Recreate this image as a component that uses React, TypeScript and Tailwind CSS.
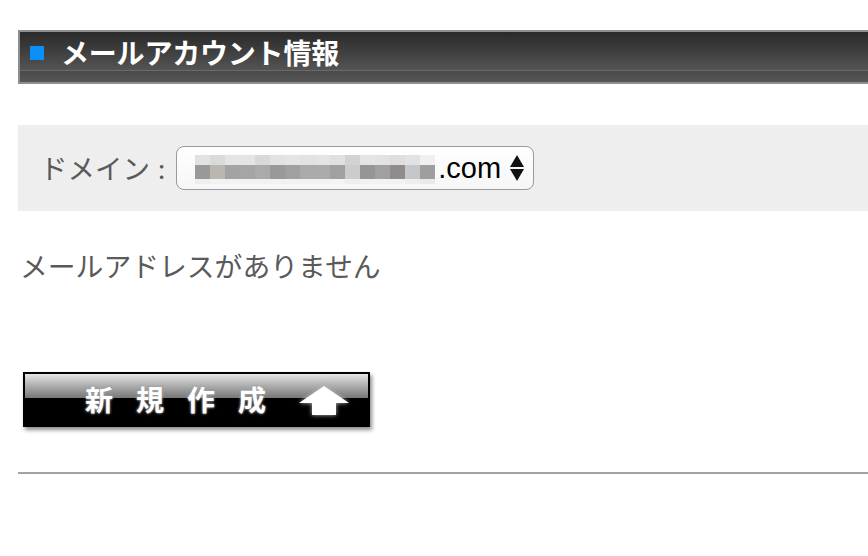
import React from "react";

const row1 = ["#e2e2e2", "#dadada", "#e4e4e4", "#e4e4e4", "#d9d9d9", "#e2e2e2", "#e4e4e4", "#e2e2e2", "#e4e4e4", "#e0e0e0", "#d2d2d2", "#e4e4e4", "#e2e2e2", "#dedede", "#e2e2e2", "#f0f0f0"];
const row2 = ["#999999", "#bbb6b0", "#a3a3a3", "#a5a5a5", "#aaaaaa", "#9a9898", "#a0a0a0", "#aaaaaa", "#aaaaaa", "#a0a0a0", "#cccccc", "#959595", "#a0a0a0", "#908c8c", "#c5c7ca", "#9e9e9e"];
const row3 = ["#eeeeee", "#f2f2f2", "#f2f2f2", "#f2f2f2", "#f2f2f2", "#f2f2f2", "#f2f2f2", "#f2f2f2", "#f2f2f2", "#f4f4f4", "#eeeeee", "#f2f2f2", "#f2f2f2", "#f2f2f2", "#eeeeee", "#eaeaea"];

function Blurred() {
  const rows = [
    { colors: row1, h: "h-[10px]" },
    { colors: row2, h: "h-[14px]" },
    { colors: row3, h: "h-[5px]" },
  ];
  return (
    <div className="flex flex-col mt-[3px]">
      {rows.map((r, i) => (
        <div key={i} className={`flex ${r.h}`}>
          {r.colors.map((c, j) => (
            <div key={j} className="w-[15px]" style={{ backgroundColor: c }} />
          ))}
        </div>
      ))}
    </div>
  );
}

export default function App() {
  return (
    <div
      className="w-[868px] h-[556px] bg-white overflow-hidden pl-[18px] pt-[30px]"
      style={{ fontFamily: '"Noto Sans CJK JP", "Noto Sans", sans-serif' }}
    >
      {/* section header */}
      <div className="border-[2px] border-r-0 border-[#8e8e8e] h-[54px] flex flex-col">
        <div className="h-[38px] bg-gradient-to-b from-[#2a2a2a] to-[#545454] flex items-center pl-[10px]">
          <div className="w-[14px] h-[14px] bg-[#0a8ef8] mt-[4px]" />
          <span className="ml-[17px] text-white font-bold text-[28px] leading-none mt-[1px] tracking-[-0.2px]">
            メールアカウント情報
          </span>
        </div>
        <div className="h-px bg-[#6a6a6a]" />
        <div className="flex-1 bg-gradient-to-b from-[#4a4a4a] to-[#575757]" />
      </div>

      {/* domain selector */}
      <div className="mt-[41px] h-[86px] bg-[#eeeeee] flex items-center pl-[22px]">
        <span className="text-[27.5px] text-[#5a5a5a] leading-none">ドメイン</span>
        <span className="ml-[8px] text-[26px] text-[#5a5a5a] leading-none">:</span>
        <div className="ml-[11px] w-[358px] h-[44px] rounded-[8px] border-[1.5px] border-[#9a9a9a] bg-gradient-to-b from-white to-[#f6f6f6] flex items-center pl-[18px] pr-[8px]">
          <Blurred />
          <span
            className="ml-[3px] text-[29px] text-black leading-none"
            style={{ fontFamily: '"Liberation Sans", Arial, sans-serif' }}
          >
            .com
          </span>
          <div className="ml-auto flex flex-col items-center gap-[2px] mr-[1px]">
            <svg width="14" height="12" viewBox="0 0 14 12">
              <path d="M7 0 L14 12 L0 12 Z" fill="#111" />
            </svg>
            <svg width="14" height="12" viewBox="0 0 14 12">
              <path d="M0 0 L14 0 L7 12 Z" fill="#111" />
            </svg>
          </div>
        </div>
      </div>

      {/* empty notice */}
      <div className="mt-[41px] pl-[2px] text-[27.8px] text-[#5a5a5a] leading-none">
        メールアドレスがありません
      </div>

      {/* new button */}
      <div className="mt-[92px] ml-[5px] w-[347px] h-[55px] border-[2px] border-black shadow-[2px_3px_4px_rgba(0,0,0,0.45)] relative flex flex-col">
        <div className="h-[24px] bg-gradient-to-b from-[#e6e6e6] to-[#777777]" />
        <div className="flex-1 bg-black" />
        <div className="absolute inset-0 flex items-center">
          <span
            className="ml-[60px] text-white font-bold text-[28px] leading-none tracking-[23px]"
            style={{ textShadow: "0 0 3px #aaa, 0 0 2px #888" }}
          >
            新規作成
          </span>
          <svg width="50" height="30" viewBox="0 0 50 30" className="ml-[10px] mt-[4px]" style={{ filter: "drop-shadow(0 0 2px #bbb)" }}>
            <path d="M25 0 L50 17 L37 17 L37 29 L13 29 L13 17 L0 17 Z" fill="white" />
          </svg>
        </div>
      </div>

      {/* divider */}
      <div className="mt-[45px] h-[2px] bg-[#a3a3a3]" />
    </div>
  );
}
